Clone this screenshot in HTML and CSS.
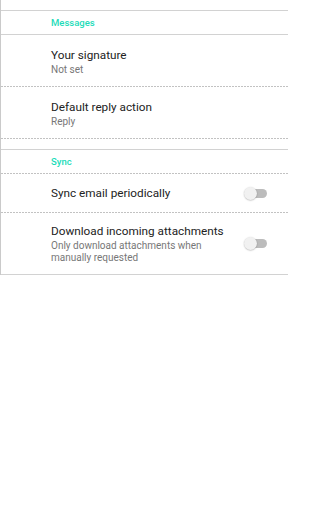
FILE: index.html
```html
<!DOCTYPE html>
<html>
<head>
<meta charset="utf-8">
<link rel="stylesheet" href="styles.css">
</head>
<body>
<div class="screen">
  <div class="spacer"></div>
  <div class="category solid">Messages</div>
  <div class="pref dotted two">
    <div class="text">
      <div class="title">Your signature</div>
      <div class="summary">Not set</div>
    </div>
  </div>
  <div class="pref dotted two">
    <div class="text">
      <div class="title">Default reply action</div>
      <div class="summary">Reply</div>
    </div>
  </div>
  <div class="spacer"></div>
  <div class="category dotted">Sync</div>
  <div class="pref dotted single">
    <div class="text">
      <div class="title">Sync email periodically</div>
    </div>
    <div class="switch"><span class="track"></span><span class="thumb"></span></div>
  </div>
  <div class="pref solid multi">
    <div class="text">
      <div class="title">Download incoming attachments</div>
      <div class="summary">Only download attachments when manually requested</div>
    </div>
    <div class="switch"><span class="track"></span><span class="thumb"></span></div>
  </div>
</div>
</body>
</html>
```

FILE: styles.css
```css
html, body {
  margin: 0;
  padding: 0;
  background: #ffffff;
}
body {
  font-family: Roboto, "Noto Sans", sans-serif;
  width: 288px;
  height: 512px;
  overflow: hidden;
}
.screen {
  width: 288px;
  box-sizing: border-box;
  border-left: 1px solid #cacaca;
  display: flex;
  flex-direction: column;
}
.solid {
  border-bottom: 1px solid #d2d2d2;
}
.dotted {
  background-image: repeating-linear-gradient(90deg, #c2c2c2 0 2px, transparent 2px 3px);
  background-size: 100% 1px;
  background-position: left bottom;
  background-repeat: no-repeat;
  padding-bottom: 1px;
}
.spacer {
  height: 10px;
  border-bottom: 1px solid #d2d2d2;
}
.category {
  height: 23px;
  box-sizing: content-box;
  display: flex;
  align-items: center;
  padding-left: 50px;
  font-size: 9.5px;
  font-weight: 500;
  color: #1ddcb9;
}
.pref {
  display: flex;
  align-items: flex-start;
  padding-left: 50px;
  padding-right: 20px;
  box-sizing: content-box;
}
.pref.two {
  height: 38px;
  padding-top: 13px;
}
.pref.single {
  height: 38px;
  align-items: center;
}
.pref.multi {
  height: 50px;
  padding-top: 11px;
  align-items: flex-start;
}
.text {
  flex: 1;
  min-width: 0;
  padding-right: 8px;
}
.title {
  font-size: 11.75px;
  line-height: 15px;
  color: #222222;
  white-space: nowrap;
}
.summary {
  font-size: 10px;
  line-height: 12px;
  color: #777777;
  margin-top: 1px;
}
.switch {
  position: relative;
  width: 24px;
  height: 13px;
  flex: none;
  align-self: center;
}
.multi .switch {
  margin-top: -11px;
}
.track {
  position: absolute;
  left: 1px;
  top: 2px;
  width: 22px;
  height: 9px;
  border-radius: 5px;
  background: #bcbcbc;
}
.thumb {
  position: absolute;
  left: 0;
  top: 0;
  width: 13px;
  height: 13px;
  border-radius: 50%;
  background: #f1f1f1;
  box-shadow: 0 0.5px 1.5px rgba(0, 0, 0, 0.3);
}
```
